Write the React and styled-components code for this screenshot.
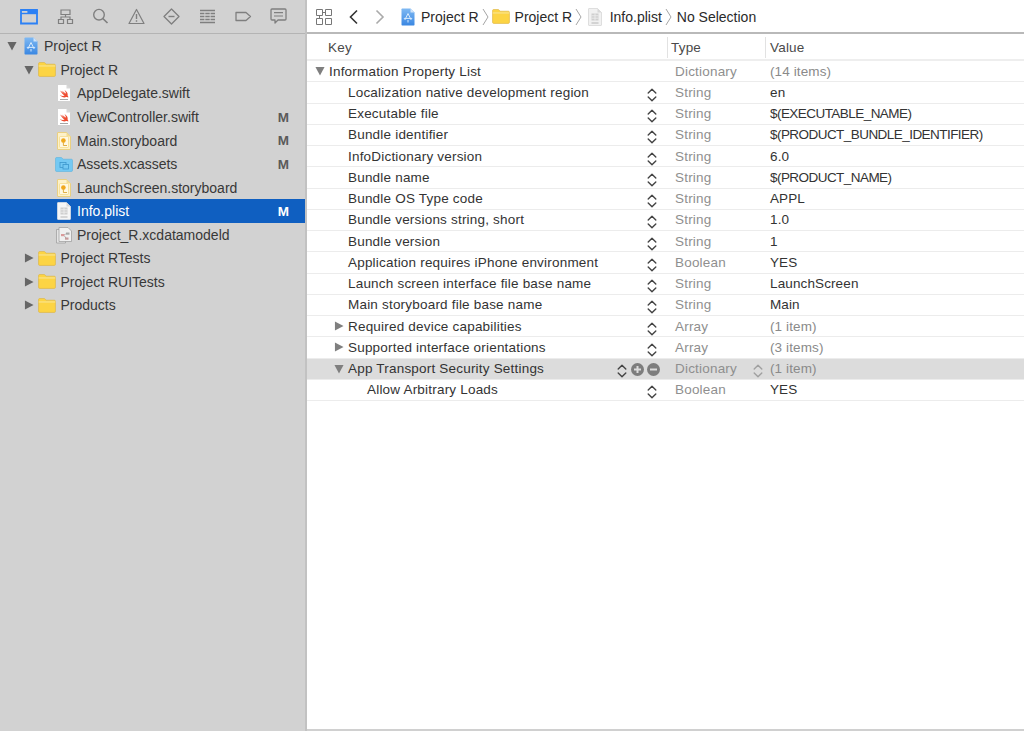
import React from "react";
import styled, { createGlobalStyle } from "styled-components";

const Global = createGlobalStyle`
  html, body { margin: 0; padding: 0; height: 100%; background: #fff; overflow: hidden; }
  body { font-family: "Liberation Sans", Arial, sans-serif; -webkit-font-smoothing: antialiased; }
  #root { height: 100%; }
`;

const Page = styled.div`
  display: flex;
  width: 1024px;
  height: 731px;
  overflow: hidden;
`;
const Sidebar = styled.aside`
  width: 305px;
  flex: none;
  background: #d2d2d2;
  border-right: 2px solid #c2c2c2;
  display: flex;
  flex-direction: column;
`;
const NavTabs = styled.nav`
  height: 34px;
  flex: none;
  box-sizing: border-box;
  border-bottom: 1px solid #b4b4b4;
  display: flex;
  align-items: center;
  padding: 0 0 1px 20px;
  gap: 18.6px;
`;
const Tree = styled.ul`
  list-style: none;
  margin: 0.6px 0 0;
  padding: 0;
`;
const TreeRow = styled.li`
  height: 23.55px;
  display: flex;
  align-items: center;
  padding-left: ${(p) => p.$indent}px;
  padding-right: 16px;
  font-size: 14px;
  letter-spacing: 0;
  color: ${(p) => (p.$selected ? "#fff" : "#383838")};
  background: ${(p) => (p.$selected ? "#0f5fc1" : "transparent")};
`;
const Disclosure = styled.span`
  width: 14px;
  flex: none;
  display: flex;
`;
const TreeIcon = styled.span`
  width: 19px;
  height: 19px;
  flex: none;
  margin-right: 4px;
  display: flex;
  align-items: center;
  justify-content: center;
`;
const TreeName = styled.span`
  flex: 1;
  white-space: nowrap;
`;
const Status = styled.span`
  font-weight: 700;
  font-size: 13.5px;
  color: ${(p) => (p.$selected ? "#fff" : "#5a5a5a")};
`;
const Main = styled.main`
  flex: 1;
  min-width: 0;
  display: flex;
  flex-direction: column;
  border-bottom: 2px solid #d0d0d0;
`;
const Toolbar = styled.header`
  height: 34px;
  box-sizing: border-box;
  flex: none;
  border-bottom: 2px solid #b9b9b9;
  display: flex;
  align-items: center;
  padding: 1px 0 0 9px;
  color: #2a2a2a;
  font-size: 14px;
  letter-spacing: 0;
`;
const ToolBtn = styled.span`
  display: flex;
  width: ${(p) => p.$w}px;
  flex: none;
  align-items: center;
`;
const Crumb = styled.span`
  display: flex;
  align-items: center;
  gap: ${(p) => p.$gap}px;
  white-space: nowrap;
`;
const CrumbSep = styled.svg`
  width: 7px;
  height: 18px;
  margin: 0 ${(p) => p.$after}px 0 3px;
  flex: none;
`;
const Table = styled.div`
  display: flex;
  flex-direction: column;
`;
const HeaderRow = styled.div`
  display: grid;
  grid-template-columns: 361px 98px 1fr;
  height: 27px;
  box-sizing: border-box;
  padding-top: 1px;
  border-bottom: 2px solid #eee;
  font-size: 13.5px;
  letter-spacing: 0.2px;
  color: #4a4a4a;
  align-items: center;
`;
const HeaderCell = styled.div`
  padding-left: ${(p) => p.$pad}px;
  height: 21px;
  display: flex;
  align-items: center;
  border-right: ${(p) => (p.$line ? "1px solid #e2e2e2" : "none")};
`;
const Row = styled.div`
  display: grid;
  grid-template-columns: 361px 98px 1fr;
  height: 21.25px;
  box-sizing: border-box;
  border-bottom: 1.5px solid #ececec;
  align-items: center;
  font-size: 13.5px;
  letter-spacing: 0.2px;
  background: ${(p) => (p.$active ? "#dcdcdc" : "#fff")};
`;
const KeyCell = styled.div`
  display: flex;
  align-items: center;
  padding-left: ${(p) => p.$indent}px;
  padding-right: ${(p) => (p.$active ? 8 : 11)}px;
  color: #333;
  white-space: nowrap;
`;
const KeyArrow = styled.span`
  width: 14px;
  margin-left: -14px;
  flex: none;
  display: flex;
`;
const KeyText = styled.span`
  flex: 1;
`;
const RowControls = styled.span`
  display: flex;
  align-items: center;
  gap: 3px;
`;
const StepperSlot = styled.span`
  display: flex;
  margin: 2.5px ${(p) => p.$after}px -2.5px 0;
`;
const RoundSlot = styled.span`
  display: flex;
  margin: 1px 0 -1px;
`;
const TypeCell = styled.div`
  padding: 0 3px 0 7px;
  color: #8f8f8f;
  display: flex;
  align-items: center;
  justify-content: space-between;
`;
const ValueCell = styled.div`
  padding-left: 4px;
  color: ${(p) => (p.$dim ? "#8a8a8a" : "#333")};
  white-space: nowrap;
  letter-spacing: ${(p) => (p.$caps ? "-0.55px" : "0.12px")};
`;

const Tri = ({ dir = "down", color = "#666", size = 10 }) => (
  <svg width={size} height={size} viewBox="0 0 11 11">
    <path d={dir === "down" ? "M0.5 1H10.5L5.5 10.5Z" : "M1 0.5L10.5 5.5L1 10.5Z"} fill={color} />
  </svg>
);

const Stepper = ({ color = "#444" }) => (
  <svg width="10" height="14" viewBox="0 0 10 14" fill="none" stroke={color} strokeWidth="1.4" strokeLinecap="round" strokeLinejoin="round">
    <path d="M1.2 5L5 1.2L8.8 5" />
    <path d="M1.2 9L5 12.8L8.8 9" />
  </svg>
);

const RoundBtn = ({ plus }) => (
  <svg width="13" height="13" viewBox="0 0 13 13">
    <circle cx="6.5" cy="6.5" r="6.5" fill="#7d7d7d" />
    <path d={plus ? "M3 6.5H10M6.5 3V10" : "M3 6.5H10"} stroke="#dcdcdc" strokeWidth="2" />
  </svg>
);

const FolderIcon = ({ w = 18 }) => (
  <svg width={w} height={w * 0.83} viewBox="0 0 18 15">
    <path d="M0.5 3V1.6C0.5 1 1 0.5 1.6 0.5H6C6.6 0.5 7 .8 7.3 1.2L8 2.2H16.4C17 2.2 17.5 2.7 17.5 3.3V13.4C17.5 14 17 14.5 16.4 14.5H1.6C1 14.5 .5 14 .5 13.4Z" fill="#fcd444" stroke="#dcb341" strokeWidth=".6" />
    <path d="M.6 4H17.4" stroke="#f9e69b" strokeWidth="1" />
  </svg>
);

const ProjectIcon = () => (
  <svg width="14" height="18" viewBox="0 0 14 18">
    <defs>
      <linearGradient id="prj" x1="0" y1="0" x2="0" y2="1">
        <stop offset="0" stopColor="#7fb9f3" />
        <stop offset="1" stopColor="#3a87e2" />
      </linearGradient>
    </defs>
    <path d="M.5 1.2C.5.8.8.5 1.2.5H9.5L13.5 4.5V16.8C13.5 17.2 13.2 17.5 12.8 17.5H1.2C.8 17.5.5 17.2.5 16.8Z" fill="url(#prj)" />
    <path d="M9.5 .5V4.5H13.5Z" fill="#cfe4fa" />
    <path d="M7 5.5L10.2 12M7 5.5L3.8 12M2.8 10.4H11.2M7 12V14.5" stroke="#d8eafc" strokeWidth="1" fill="none" />
  </svg>
);

const FileBase = ({ children, fill = "#fff", fold = "#d8d8d8", stroke = "#c8c8c8" }) => (
  <svg width="14" height="18" viewBox="0 0 14 18">
    <path d="M.5 1C.5.7.7.5 1 .5H9.5L13.5 4.5V17C13.5 17.3 13.3 17.5 13 17.5H1C.7 17.5.5 17.3.5 17Z" fill={fill} stroke={stroke} strokeWidth=".7" />
    <path d="M9.5.5V4.5H13.5Z" fill={fold} />
    {children}
  </svg>
);

const SwiftIcon = () => (
  <FileBase>
    <path d="M3 6.5C5 8 6.8 9.4 8 10.2 6.8 9 5.6 7.6 4.8 6.4 6.5 7.8 8.2 9 9.2 9.6 8.7 8.4 8.2 7.2 7.5 6 9.8 7.5 11.2 9.6 10.6 11.6 11.4 12.6 11.4 13.2 11.2 13.6 10.6 12.9 9.8 12.8 9.1 13.1 7 13.9 4.6 13.1 2.8 11 4.8 12.2 6.6 12.2 7.6 11.6 6 10.6 4.4 8.6 3 6.5Z" fill="#ee4b30" />
    <rect x="3" y="15" width="8" height="1" fill="#a5a5a5" />
  </FileBase>
);

const StoryboardIcon = () => (
  <FileBase fill="#fdf1c9" fold="#f2dc94" stroke="#ecc95f">
    <rect x="2.5" y="4.5" width="9" height="11" rx="1" fill="#fff8e2" stroke="#f1d476" strokeWidth=".6" />
    <circle cx="6.4" cy="8.6" r="2.3" fill="#f0a81e" />
    <path d="M6.4 11V13.5H10" stroke="#d79a1c" strokeWidth=".8" fill="none" />
  </FileBase>
);

const PlistIcon = ({ dim }) => (
  <FileBase fill={dim ? "#f1f1f1" : "#f6f6f6"} stroke={dim ? "#d2d2d2" : "#e8e8e8"}>
    <path d="M3.5 5.5H10.5V12.5H3.5Z" fill="#cfcfcf" />
    <path d="M3.5 7.8H10.5M3.5 10.2H10.5M7 5.5V12.5" stroke="#f0f0f0" strokeWidth=".8" />
    <rect x="3.5" y="14.5" width="7" height="1" fill="#b5b5b5" />
  </FileBase>
);

const AssetsIcon = () => (
  <svg width="18" height="15" viewBox="0 0 18 15">
    <path d="M.5 3V1.6C.5 1 1 .5 1.6 .5H6C6.6 .5 7 .8 7.3 1.2L8 2.2H16.4C17 2.2 17.5 2.7 17.5 3.3V13.4C17.5 14 17 14.5 16.4 14.5H1.6C1 14.5 .5 14 .5 13.4Z" fill="#74c9f3" stroke="#5db3de" strokeWidth=".6" />
    <rect x="5" y="5.5" width="6" height="5" fill="none" stroke="#3c97cc" strokeWidth=".8" />
    <rect x="8" y="7.5" width="5.5" height="4.5" fill="#74c9f3" stroke="#3c97cc" strokeWidth=".8" />
  </svg>
);

const ModelIcon = () => (
  <svg width="18" height="18" viewBox="0 0 18 18">
    <path d="M1.5 3.5H10.5V17H1.5Z" fill="#e4e4e4" stroke="#9a9a9a" strokeWidth=".7" />
    <path d="M4 1.5H13L16.5 5V15.5H4Z" fill="#f0f0f0" stroke="#9a9a9a" strokeWidth=".7" />
    <rect x="6" y="8" width="3.5" height="2.2" fill="#d99a9a" />
    <rect x="11" y="6.5" width="3.5" height="2.2" fill="#a8a8a8" />
    <rect x="10" y="11.5" width="3.5" height="2.2" fill="#c79a9a" />
    <path d="M9.5 9L11 7.5M9.5 10L11 12" stroke="#888" strokeWidth=".6" fill="none" />
  </svg>
);

const icons = {
  project: <ProjectIcon />,
  folder: <FolderIcon />,
  swift: <SwiftIcon />,
  storyboard: <StoryboardIcon />,
  assets: <AssetsIcon />,
  plist: <PlistIcon />,
  model: <ModelIcon />,
};

const TabSvg = ({ children, w = 17 }) => (
  <svg width={w} height="17" viewBox={`0 0 ${w} 17`} fill="none" stroke="#7f7f7f" strokeWidth="1.2">
    {children}
  </svg>
);

const tabs = [
  <svg key="f" width="18" height="17" viewBox="0 0 18 17" fill="none" stroke="#2b80f5" strokeWidth="1.8">
    <path d="M1 2H17V15.5H1Z" />
    <path d="M1 2H8V5.5H17V2" fill="#2b80f5" strokeWidth="1.2" />
    <path d="M1 5.5H17" strokeWidth="1.4" />
  </svg>,
  <TabSvg key="h"><path d="M4 2H13V6.5H4ZM8.5 6.5V9M4 11.5V9H13V11.5M1.5 11.5H6.5V15.5H1.5ZM10.5 11.5H15.5V15.5H10.5Z" /></TabSvg>,
  <TabSvg key="s"><circle cx="7" cy="6.7" r="5.3" strokeWidth="1.4" /><path d="M10.8 10.5L15.5 15" strokeWidth="1.7" /></TabSvg>,
  <TabSvg key="w"><path d="M8.5 1.5L16 15.5H1Z" strokeLinejoin="round" /><path d="M8.5 6V11M8.5 12.2V13.8" strokeWidth="1.4" /></TabSvg>,
  <TabSvg key="d"><path d="M8.5 1L16 8.5L8.5 16L1 8.5Z" strokeLinejoin="round" strokeWidth="1.3" /><path d="M5.5 8.5H11.5" strokeWidth="1.4" /></TabSvg>,
  <TabSvg key="t"><path d="M1 2.5H16M1 14.5H16" strokeWidth="1.3" /><path d="M1 5.5H16M1 8.5H16M1 11.5H16" strokeWidth="1.3" strokeDasharray="4.4 .9" /></TabSvg>,
  <TabSvg key="l"><path d="M1 4.5H11L15.5 8.5L11 12.5H1Z" strokeLinejoin="round" strokeWidth="1.3" /></TabSvg>,
  <TabSvg key="c"><path d="M2 1H15C15.6 1 16 1.5 16 2V11C16 11.5 15.6 12 15 12H8L5 15V12H2C1.4 12 1 11.5 1 11V2C1 1.5 1.4 1 2 1Z" strokeLinejoin="round" strokeWidth="1.3" /><path d="M4 4.7H13M4 8H13" /></TabSvg>,
];

const tree = [
  { name: "Project R", indent: 7, open: true, icon: "project" },
  { name: "Project R", indent: 23.5, open: true, icon: "folder" },
  { name: "AppDelegate.swift", indent: 54, icon: "swift" },
  { name: "ViewController.swift", indent: 54, icon: "swift", status: "M" },
  { name: "Main.storyboard", indent: 54, icon: "storyboard", status: "M" },
  { name: "Assets.xcassets", indent: 54, icon: "assets", status: "M" },
  { name: "LaunchScreen.storyboard", indent: 54, icon: "storyboard" },
  { name: "Info.plist", indent: 54, icon: "plist", status: "M", selected: true },
  { name: "Project_R.xcdatamodeld", indent: 54, icon: "model" },
  { name: "Project RTests", indent: 23.5, closed: true, icon: "folder" },
  { name: "Project RUITests", indent: 23.5, closed: true, icon: "folder" },
  { name: "Products", indent: 23.5, closed: true, icon: "folder" },
];

const rows = [
  { key: "Information Property List", type: "Dictionary", value: "(14 items)", dim: true, indent: 22, arrow: "down", noStep: true },
  { key: "Localization native development region", type: "String", value: "en", indent: 41 },
  { key: "Executable file", type: "String", value: "$(EXECUTABLE_NAME)", caps: true, indent: 41 },
  { key: "Bundle identifier", type: "String", value: "$(PRODUCT_BUNDLE_IDENTIFIER)", caps: true, indent: 41 },
  { key: "InfoDictionary version", type: "String", value: "6.0", indent: 41 },
  { key: "Bundle name", type: "String", value: "$(PRODUCT_NAME)", caps: true, indent: 41 },
  { key: "Bundle OS Type code", type: "String", value: "APPL", indent: 41 },
  { key: "Bundle versions string, short", type: "String", value: "1.0", indent: 41 },
  { key: "Bundle version", type: "String", value: "1", indent: 41 },
  { key: "Application requires iPhone environment", type: "Boolean", value: "YES", indent: 41 },
  { key: "Launch screen interface file base name", type: "String", value: "LaunchScreen", indent: 41 },
  { key: "Main storyboard file base name", type: "String", value: "Main", indent: 41 },
  { key: "Required device capabilities", type: "Array", value: "(1 item)", dim: true, indent: 41, arrow: "right" },
  { key: "Supported interface orientations", type: "Array", value: "(3 items)", dim: true, indent: 41, arrow: "right" },
  { key: "App Transport Security Settings", type: "Dictionary", value: "(1 item)", dim: true, indent: 41, arrow: "down", active: true },
  { key: "Allow Arbitrary Loads", type: "Boolean", value: "YES", indent: 60 },
];

const Chevron = ({ after }) => (
  <CrumbSep $after={after} viewBox="0 0 7 18" fill="none" stroke="#a5a5a5"><path d="M1 1L6 9L1 17" /></CrumbSep>
);

export default function App() {
  return (
    <Page>
      <Global />
      <Sidebar>
        <NavTabs>{tabs}</NavTabs>
        <Tree>
          {tree.map((t, i) => (
            <TreeRow key={i} $indent={t.indent} $selected={t.selected}>
              {t.open && <Disclosure><Tri /></Disclosure>}
              {t.closed && <Disclosure><Tri dir="right" /></Disclosure>}
              <TreeIcon>{icons[t.icon]}</TreeIcon>
              <TreeName>{t.name}</TreeName>
              {t.status && <Status $selected={t.selected}>{t.status}</Status>}
            </TreeRow>
          ))}
        </Tree>
      </Sidebar>
      <Main>
        <Toolbar>
          <ToolBtn $w={32}>
            <svg width="16" height="16" viewBox="0 0 16 16" fill="none" stroke="#777" strokeWidth="1">
              <path d="M.5 .5H6.5V6.5H.5ZM9.5 .5H15.5V6.5H9.5ZM.5 9.5H6.5V15.5H.5ZM9.5 9.5H15.5V15.5H9.5ZM6.5 3.5H9.5M3.5 6.5V9.5" />
            </svg>
          </ToolBtn>
          <ToolBtn $w={26}>
            <svg width="11" height="16" viewBox="0 0 11 16" fill="none" stroke="#333" strokeWidth="1.6"><path d="M9 1.5L2.5 8L9 14.5" /></svg>
          </ToolBtn>
          <ToolBtn $w={26.5}>
            <svg width="11" height="16" viewBox="0 0 11 16" fill="none" stroke="#aaa" strokeWidth="1.6"><path d="M2.5 1.5L9 8L2.5 14.5" /></svg>
          </ToolBtn>
          <Crumb $gap={6.5}><ProjectIcon />Project R</Crumb>
          <Chevron after={3} />
          <Crumb $gap={5}><FolderIcon />Project R</Crumb>
          <Chevron after={5.5} />
          <Crumb $gap={8}><PlistIcon dim />Info.plist</Crumb>
          <Chevron after={5} />
          <Crumb $gap={0}>No Selection</Crumb>
        </Toolbar>
        <Table>
          <HeaderRow>
            <HeaderCell $pad={21} $line>Key</HeaderCell>
            <HeaderCell $pad={3} $line>Type</HeaderCell>
            <HeaderCell $pad={4}>Value</HeaderCell>
          </HeaderRow>
          {rows.map((r) => (
            <Row key={r.key} $active={r.active}>
              <KeyCell $indent={r.indent} $active={r.active}>
                {r.arrow && <KeyArrow><Tri dir={r.arrow} color="#7f7f7f" /></KeyArrow>}
                <KeyText>{r.key}</KeyText>
                <RowControls>
                  {r.active && <StepperSlot $after={1}><Stepper /></StepperSlot>}
                  {r.active && <RoundSlot><RoundBtn plus /></RoundSlot>}
                  {r.active && <RoundSlot><RoundBtn /></RoundSlot>}
                  {!r.active && !r.noStep && <StepperSlot $after={0}><Stepper /></StepperSlot>}
                </RowControls>
              </KeyCell>
              <TypeCell>
                {r.type}
                {r.active && <StepperSlot $after={0}><Stepper color="#a0a0a0" /></StepperSlot>}
              </TypeCell>
              <ValueCell $dim={r.dim} $caps={r.caps}>{r.value}</ValueCell>
            </Row>
          ))}
        </Table>
      </Main>
    </Page>
  );
}
